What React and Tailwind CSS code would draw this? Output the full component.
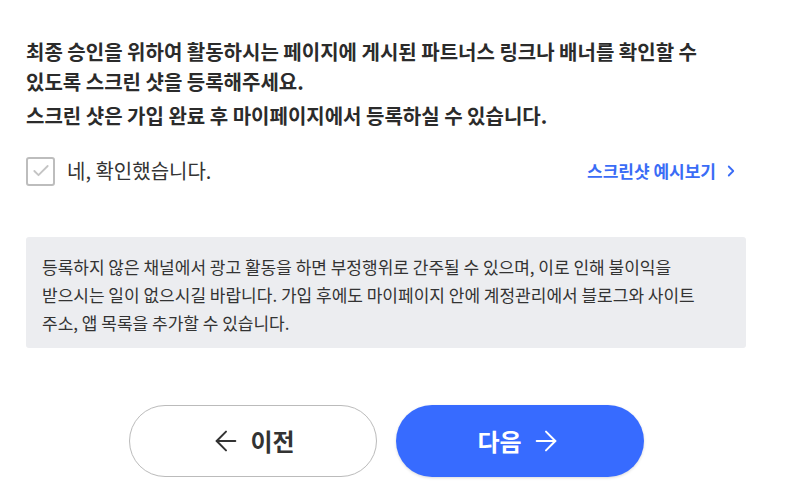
import { ArrowLeft, ArrowRight, Check, ChevronRight } from "lucide-react";

const font = { fontFamily: '"Noto Sans CJK KR", "Noto Sans", sans-serif' };

export default function App() {
  return (
    <div className="w-[796px] h-[481px] bg-white overflow-hidden" style={font}>
      <div className="w-[720px] ml-[26px] pt-[37px]">
        <p className="text-[20px] leading-[30px] font-bold text-[#2b2b2b] tracking-[0px]">
          최종 승인을 위하여 활동하시는 페이지에 게시된 파트너스 링크나 배너를 확인할 수
          <br />
          있도록 스크린 샷을 등록해주세요.
        </p>
        <p className="mt-[4px] text-[20px] leading-[30px] font-bold text-[#2b2b2b]">
          스크린 샷은 가입 완료 후 마이페이지에서 등록하실 수 있습니다.
        </p>

        <div className="mt-[25px] flex items-center justify-between">
          <label className="flex items-center gap-[12px]">
            <span className="w-[29px] h-[29px] border-2 border-[#bdbdbd] rounded-[3px] flex items-center justify-center">
              <Check size={20} strokeWidth={2.2} className="text-[#c4c4c4]" />
            </span>
            <span className="text-[20px] text-[#333]">네, 확인했습니다.</span>
          </label>
          <a className="mr-[6px] flex items-center gap-[6px] text-[17px] font-bold text-[#3a6cf6]">
            스크린샷 예시보기
            <ChevronRight size={18} strokeWidth={2.4} />
          </a>
        </div>

        <div className="mt-[51px] bg-[#ecedf0] rounded-[3px] pl-[16px] pt-[16px] pb-[11px] pr-[16px]">
          <p className="text-[17px] leading-[28px] text-[#333]">
            등록하지 않은 채널에서 광고 활동을 하면 부정행위로 간주될 수 있으며, 이로 인해 불이익을
            <br />
            받으시는 일이 없으시길 바랍니다. 가입 후에도 마이페이지 안에 계정관리에서 블로그와 사이트
            <br />
            주소, 앱 목록을 추가할 수 있습니다.
          </p>
        </div>
      </div>

      <div className="mt-[57px] flex justify-center gap-[19px] pr-[24px]">
        <button className="w-[248px] h-[72px] rounded-full border border-[#bbb] bg-white flex items-center justify-center gap-[8px] text-[24px] font-bold text-[#333]">
          <ArrowLeft size={32} strokeWidth={1.5} />
          이전
        </button>
        <button className="w-[248px] h-[72px] rounded-full bg-[#376bff] flex items-center justify-center gap-[8px] text-[24px] font-bold text-white shadow-[0_1px_3px_rgba(0,0,0,0.15)]">
          다음
          <ArrowRight size={32} strokeWidth={1.5} />
        </button>
      </div>
    </div>
  );
}
